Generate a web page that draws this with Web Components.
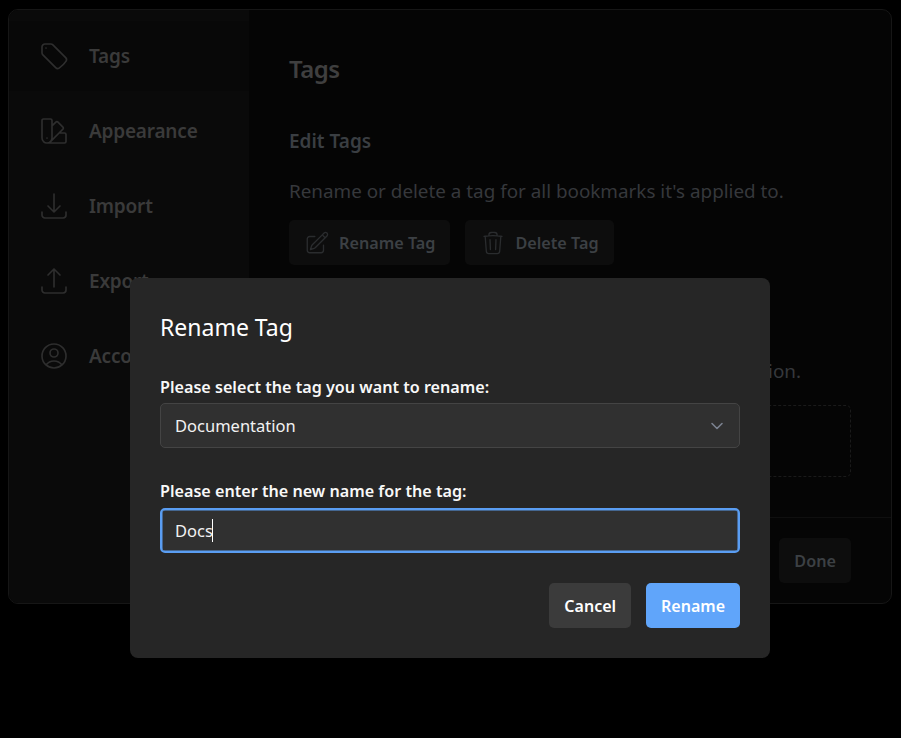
<!DOCTYPE html>
<html lang="en"><head><meta charset="utf-8"><title>Rename Tag</title>
<style>
html,body{margin:0;height:100%;background:#000}
body{font-family:"Noto Sans","Open Sans",sans-serif;position:relative;height:738px;overflow:hidden}
</style></head>
<body>
<settings-panel>
  <nav-item slot="nav" icon="tag" active>Tags</nav-item>
  <nav-item slot="nav" icon="swatch">Appearance</nav-item>
  <nav-item slot="nav" icon="down">Import</nav-item>
  <nav-item slot="nav" icon="up">Export</nav-item>
  <nav-item slot="nav" icon="user">Account</nav-item>
  <h-title>Tags</h-title>
  <sub-title>Edit Tags</sub-title>
  <desc-text>Rename or delete a tag for all bookmarks it's applied to.</desc-text>
  <action-row>
    <ghost-button icon="pencil">Rename Tag</ghost-button>
    <ghost-button icon="trash">Delete Tag</ghost-button>
  </action-row>
  <desc-text end>Select a file to use for this action.</desc-text>
  <drop-zone></drop-zone>
  <ghost-button slot="footer" plain>Done</ghost-button>
</settings-panel>
<rename-dialog>
  <span slot="title">Rename Tag</span>
  <form-field label="Please select the tag you want to rename:"><select-box>Documentation</select-box></form-field>
  <form-field label="Please enter the new name for the tag:"><text-box>Docs</text-box></form-field>
  <dialog-button slot="actions">Cancel</dialog-button>
  <dialog-button slot="actions" primary>Rename</dialog-button>
</rename-dialog>
<script>
const ICONS={
tag:'<path d="M9.568 3H5.25A2.25 2.25 0 003 5.25v4.318c0 .597.237 1.17.659 1.591l9.581 9.581c.699.699 1.78.872 2.607.33a18.095 18.095 0 005.223-5.223c.542-.827.369-1.908-.33-2.607L11.16 3.66A2.25 2.25 0 009.568 3z"/><path d="M6 6h.008v.008H6V6z"/>',
swatch:'<path d="M4.098 19.902a3.75 3.75 0 005.304 0l6.401-6.402M6.75 21A3.75 3.75 0 013 17.25V4.125C3 3.504 3.504 3 4.125 3h5.25c.621 0 1.125.504 1.125 1.125v4.072M6.75 21a3.75 3.75 0 003.75-3.75V8.197M6.75 21h13.125c.621 0 1.125-.504 1.125-1.125v-5.25c0-.621-.504-1.125-1.125-1.125h-4.072M10.5 8.197l2.88-2.88c.438-.439 1.15-.439 1.59 0l3.712 3.713c.44.44.44 1.152 0 1.59l-2.879 2.88M6.75 17.25h.008v.008H6.75v-.008z"/>',
down:'<path d="M3 16.5v2.25A2.25 2.25 0 005.25 21h13.5A2.25 2.25 0 0021 18.75V16.5M16.5 12L12 16.5m0 0L7.5 12m4.5 4.5V3"/>',
up:'<path d="M3 16.5v2.25A2.25 2.25 0 005.25 21h13.5A2.25 2.25 0 0021 18.75V16.5m-13.5-9L12 3m0 0l4.5 4.5M12 3v13.5"/>',
user:'<path d="M17.982 18.725A7.488 7.488 0 0012 15.75a7.488 7.488 0 00-5.982 2.975m11.964 0a9 9 0 10-11.963 0m11.963 0A8.966 8.966 0 0112 21a8.966 8.966 0 01-5.982-2.275M15 9.75a3 3 0 11-6 0 3 3 0 016 0z"/>',
pencil:'<path d="M16.862 4.487l1.687-1.688a1.875 1.875 0 112.652 2.652L10.582 16.07a4.5 4.5 0 01-1.897 1.13L6 18l.8-2.685a4.5 4.5 0 011.13-1.897l8.932-8.931zm0 0L19.5 7.125M18 14v4.75A2.25 2.25 0 0115.75 21H5.25A2.25 2.25 0 013 18.75V8.25A2.25 2.25 0 015.25 6H10"/>',
trash:'<path d="M14.74 9l-.346 9m-4.788 0L9.26 9m9.968-3.21c.342.052.682.107 1.022.166m-1.022-.165L18.16 19.673a2.25 2.25 0 01-2.244 2.077H8.084a2.25 2.25 0 01-2.244-2.077L4.772 5.79m14.456 0a48.108 48.108 0 00-3.478-.397m-12 .562c.34-.059.68-.114 1.022-.165m0 0a48.11 48.11 0 013.478-.397m7.5 0v-.916c0-1.18-.91-2.164-2.09-2.201a51.964 51.964 0 00-3.32 0c-1.18.037-2.09 1.022-2.09 2.201v.916m7.5 0a48.667 48.667 0 00-7.5 0"/>'
};
const svg=(n,s)=>`<svg part="i" width="${s}" height="${s}" viewBox="0 0 24 24" fill="none" stroke="currentColor" stroke-width="1.25" stroke-linecap="round" stroke-linejoin="round">${ICONS[n]}</svg>`;
function def(name,css,html){customElements.define(name,class extends HTMLElement{
  constructor(){super();this.attachShadow({mode:'open'}).innerHTML=`<style>${css}</style>`+(typeof html==='function'?html(this):html||'<slot></slot>');}
  connectedCallback(){if(typeof html==='function')this.shadowRoot.innerHTML=`<style>${css}</style>`+html(this);}
});}
def('settings-panel',`
:host{display:block;box-sizing:border-box;position:absolute;left:8px;top:9px;width:884px;height:595px;border:1px solid #161616;border-radius:10px;background:#050505;overflow:hidden}
.wrap{display:grid;grid-template-columns:240px 1fr;height:100%}
aside{background:#0a0a0a;padding-top:11px;display:flex;flex-direction:column;gap:5px}
.right{display:flex;flex-direction:column;min-width:0}
main{flex:1;padding:39px 40px 0 40px;min-height:0;display:flex;flex-direction:column}
footer{height:86px;box-sizing:border-box;border-top:1px solid #0f0f0f;padding:20px 40px 0 0;display:flex;justify-content:flex-end;align-items:flex-start}
`,`<div class="wrap"><aside><slot name="nav"></slot></aside><div class="right"><main><slot></slot></main><footer><slot name="footer"></slot></footer></div></div>`);
def('nav-item',`
:host{display:flex;align-items:center;height:70px;padding-left:29px;gap:19px;color:#3a3a3a;font-size:19px;letter-spacing:-.2px;font-weight:600;box-sizing:border-box}
:host([active]){background:#080808}
svg{color:#2e2e2e;flex:none}
`,h=>svg(h.getAttribute('icon'),32)+'<span><slot></slot></span>');
def('h-title',`:host{display:block;color:#3f3f3f;font-size:24px;font-weight:600;line-height:40px;letter-spacing:-.5px}`);
def('sub-title',`:host{display:block;color:#3a3e42;font-size:19px;font-weight:600;line-height:28px;margin-top:38px}`);
def('desc-text',`:host{display:block;color:#36383c;font-size:18.85px;line-height:28px;margin-top:22px}
:host([end]){text-align:right;padding-right:50px;margin-top:92px}`);
def('action-row',`:host{display:flex;gap:15px;margin-top:15px}`);
def('ghost-button',`
:host{display:inline-flex;align-items:center;gap:9px;height:45px;box-sizing:border-box;padding:0 15px;border-radius:5px;background:#0d0d0d;color:#3c4044;font-size:16.2px;font-weight:600}
svg{color:#2a2c2e}
`,h=>(h.getAttribute('icon')?svg(h.getAttribute('icon'),26):'')+'<slot></slot>');
def('drop-zone',`:host{display:block;height:72px;margin-top:20px;border:1px dashed #1a1a1a;border-radius:5px;box-sizing:border-box}`);
def('rename-dialog',`
:host{position:absolute;left:130px;top:278px;width:640px;height:380px;box-sizing:border-box;background:#262626;border-radius:8px;padding:30px;color:#fff;display:flex;flex-direction:column}
h2{margin:0 0 29px;font-size:23px;font-weight:400;line-height:38px}
.actions{display:flex;justify-content:flex-end;gap:15px;margin-top:30px}
`,`<h2><slot name="title"></slot></h2><slot></slot><div class="actions"><slot name="actions"></slot></div>`);
def('form-field',`
:host{display:block;margin-bottom:31px}
:host(:last-of-type){margin-bottom:0}
label{display:block;font-size:16.15px;font-weight:600;line-height:24px;margin-bottom:4px;color:#f8f8f8}
`,h=>`<label>${h.getAttribute('label')}</label><slot></slot>`);
def('select-box',`
:host{display:flex;align-items:center;justify-content:space-between;height:45px;box-sizing:border-box;padding:0 15px 0 14px;background:#303030;border:1px solid #444;border-radius:5px;font-size:16.5px;color:#f2f2f2}
svg{color:#7b8290}
`,`<slot></slot><svg width="14" height="14" viewBox="0 0 14 14" fill="none" stroke="currentColor" stroke-width="1.6" stroke-linecap="round" stroke-linejoin="round"><path d="M2 4.5 7 9.5 12 4.5"/></svg>`);
def('text-box',`
:host{display:flex;align-items:center;height:45px;margin-top:5px;box-sizing:border-box;padding:0 13px;background:#303030;border:2px solid #5a9df2;box-shadow:inset 0 0 0 .5px #5a9df2;border-radius:5px;font-size:16.5px;color:#f2f2f2}
i{display:block;width:1px;height:23px;background:#fff;flex:none;margin-left:-1px}
`,`<slot></slot><i></i>`);
def('dialog-button',`
:host{display:flex;align-items:center;justify-content:center;height:45px;box-sizing:border-box;padding:1px 15px 0;border-radius:5px;background:#3b3b3b;color:#fff;font-size:16px;font-weight:600}
:host([primary]){background:#60a5fa}
`);
</script>
</body></html>
